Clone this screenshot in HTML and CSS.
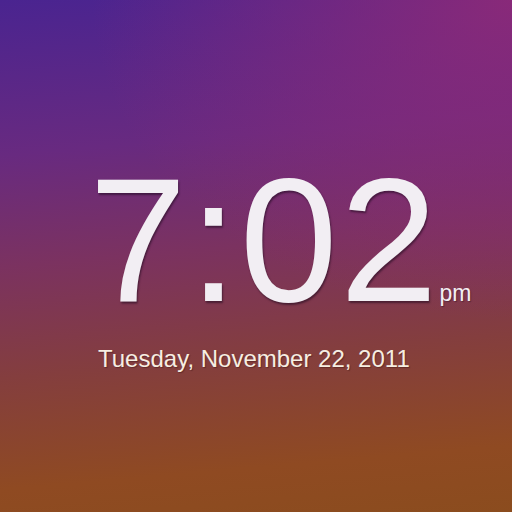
FILE: index.html
```html
<!DOCTYPE html>
<html>
<head>
<meta charset="utf-8">
<link rel="stylesheet" href="styles.css">
</head>
<body>
<main class="screen">
  <div class="clock">
    <div class="time-row">
      <span class="time">7:02</span>
      <span class="ampm">pm</span>
    </div>
    <div class="date">Tuesday, November 22, 2011</div>
  </div>
</main>
</body>
</html>
```
FILE: styles.css
```css
html, body {
  margin: 0;
  padding: 0;
  width: 512px;
  height: 512px;
  overflow: hidden;
}
.screen {
  width: 512px;
  height: 512px;
  box-sizing: border-box;
  font-family: "Liberation Sans", Arial, sans-serif;
  background:
    radial-gradient(ellipse 420px 320px at 100% 0%, rgba(146, 42, 118, 0.85), rgba(146, 42, 118, 0) 100%),
    linear-gradient(175deg, #4a2490 0%, #682a80 28%, #7b3260 48%, #843e3e 68%, #8f4a22 88%, #8b4c1e 100%);
  padding-top: 152px;
  padding-left: 89px;
}
.clock {
  display: flex;
  flex-direction: column;
}
.time-row {
  display: flex;
  align-items: baseline;
  height: 157px;
}
.time {
  font-size: 176px;
  line-height: 176px;
  letter-spacing: 2px;
  color: #f2eef3;
  text-shadow: 1px 2px 2px rgba(30, 10, 30, 0.55);
}
.ampm {
  font-size: 23px;
  color: #f2eef3;
  margin-left: 0;
  text-shadow: 1px 1px 1px rgba(30, 10, 30, 0.4);
}
.date {
  font-size: 24px;
  line-height: 28px;
  color: #f6eee2;
  margin-left: 9px;
  margin-top: 36px;
  text-shadow: 1px 1px 1px rgba(40, 10, 10, 0.35);
}
```
